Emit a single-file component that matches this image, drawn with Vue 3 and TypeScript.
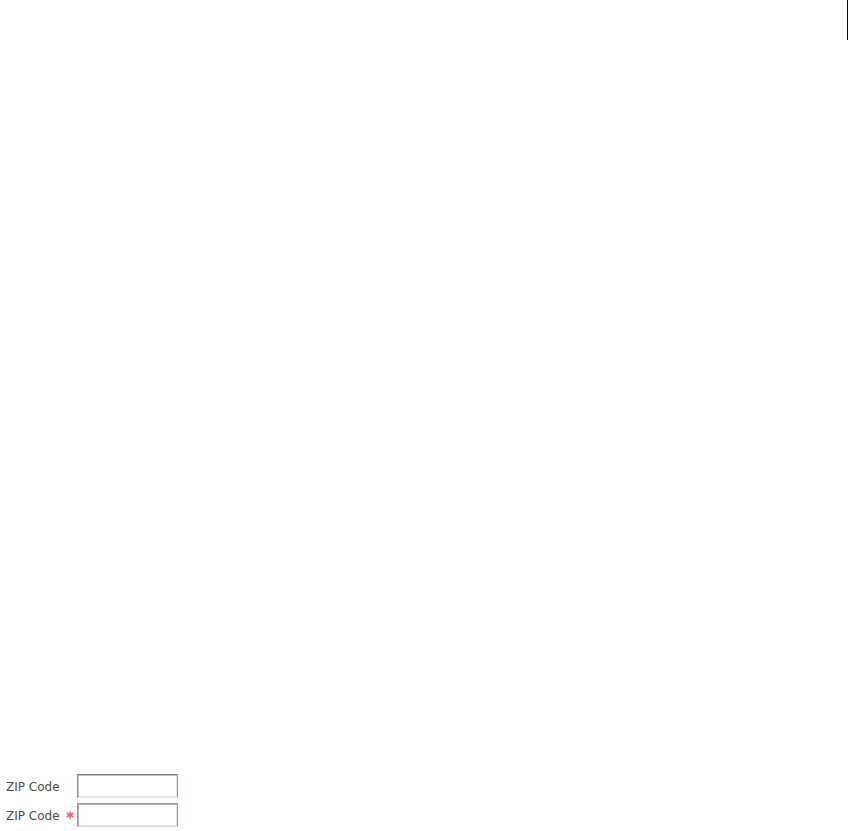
<script setup lang="ts">
import { ref } from 'vue'

interface ZipField {
  id: string
  label: string
  required: boolean
}

const fields: ZipField[] = [
  { id: 'zip-optional', label: 'ZIP Code', required: false },
  { id: 'zip-required', label: 'ZIP Code', required: true },
]

const values = ref<Record<string, string>>({
  'zip-optional': '',
  'zip-required': '',
})
</script>

<template>
  <main class="page">
    <div class="margin-rule"></div>
    <form class="form" @submit.prevent>
      <div v-for="field in fields" :key="field.id" class="row">
        <label class="label" :for="field.id">{{ field.label }}</label>
        <span class="marker">
          <svg v-if="field.required" class="asterisk" viewBox="0 0 8 8" aria-hidden="true">
            <path d="M4 0.4V7.6M0.6 2L7.4 6M7.4 2L0.6 6" />
          </svg>
        </span>
        <input
          :id="field.id"
          v-model="values[field.id]"
          class="input"
          :class="{ 'input-required': field.required }"
          type="text"
          :required="field.required"
        />
      </div>
    </form>
  </main>
</template>

<style>
body {
  margin: 0;
  background: #fff;
}
</style>

<style scoped>
.page {
  box-sizing: border-box;
  min-height: 100vh;
  display: flex;
  flex-direction: column;
  justify-content: space-between;
  padding-bottom: 4px;
  font-family: 'DejaVu Sans', sans-serif;
  font-size: 12px;
}

.margin-rule {
  align-self: flex-end;
  width: 1px;
  height: 40px;
  background: #000;
}

.form {
  display: flex;
  flex-direction: column;
  gap: 5px;
  padding-left: 6px;
}

.row {
  display: grid;
  grid-template-columns: 60px 11px 101px;
  align-items: center;
}

.label {
  padding-top: 2px;
  color: #4c4c4c;
  line-height: 16px;
  white-space: nowrap;
}

.marker {
  display: flex;
  align-items: center;
  height: 16px;
}

.asterisk {
  display: block;
  width: 8px;
  height: 8px;
  fill: none;
  stroke: #ec6464;
  stroke-width: 1.5;
}

.input {
  box-sizing: border-box;
  width: 100%;
  height: 24px;
  margin: 0;
  padding: 0 3px;
  border: 1px solid;
  border-color: #7c8481 #929d99 #e6eae9 #8d9894;
  border-radius: 0;
  outline: none;
  background: #fff;
  box-shadow: inset 1px 1px #b9c2bf, inset -1px -1px #e0e6e4;
  color: #333;
  font: inherit;
}

.input-required {
  border-color: #959f9b #929d99 #d2d8d6 #8d9894;
  box-shadow: inset 1px 1px #a9b2af, inset -1px -1px #e0e6e4;
}

.input:focus {
  border-color: #4c6f62;
}
</style>
